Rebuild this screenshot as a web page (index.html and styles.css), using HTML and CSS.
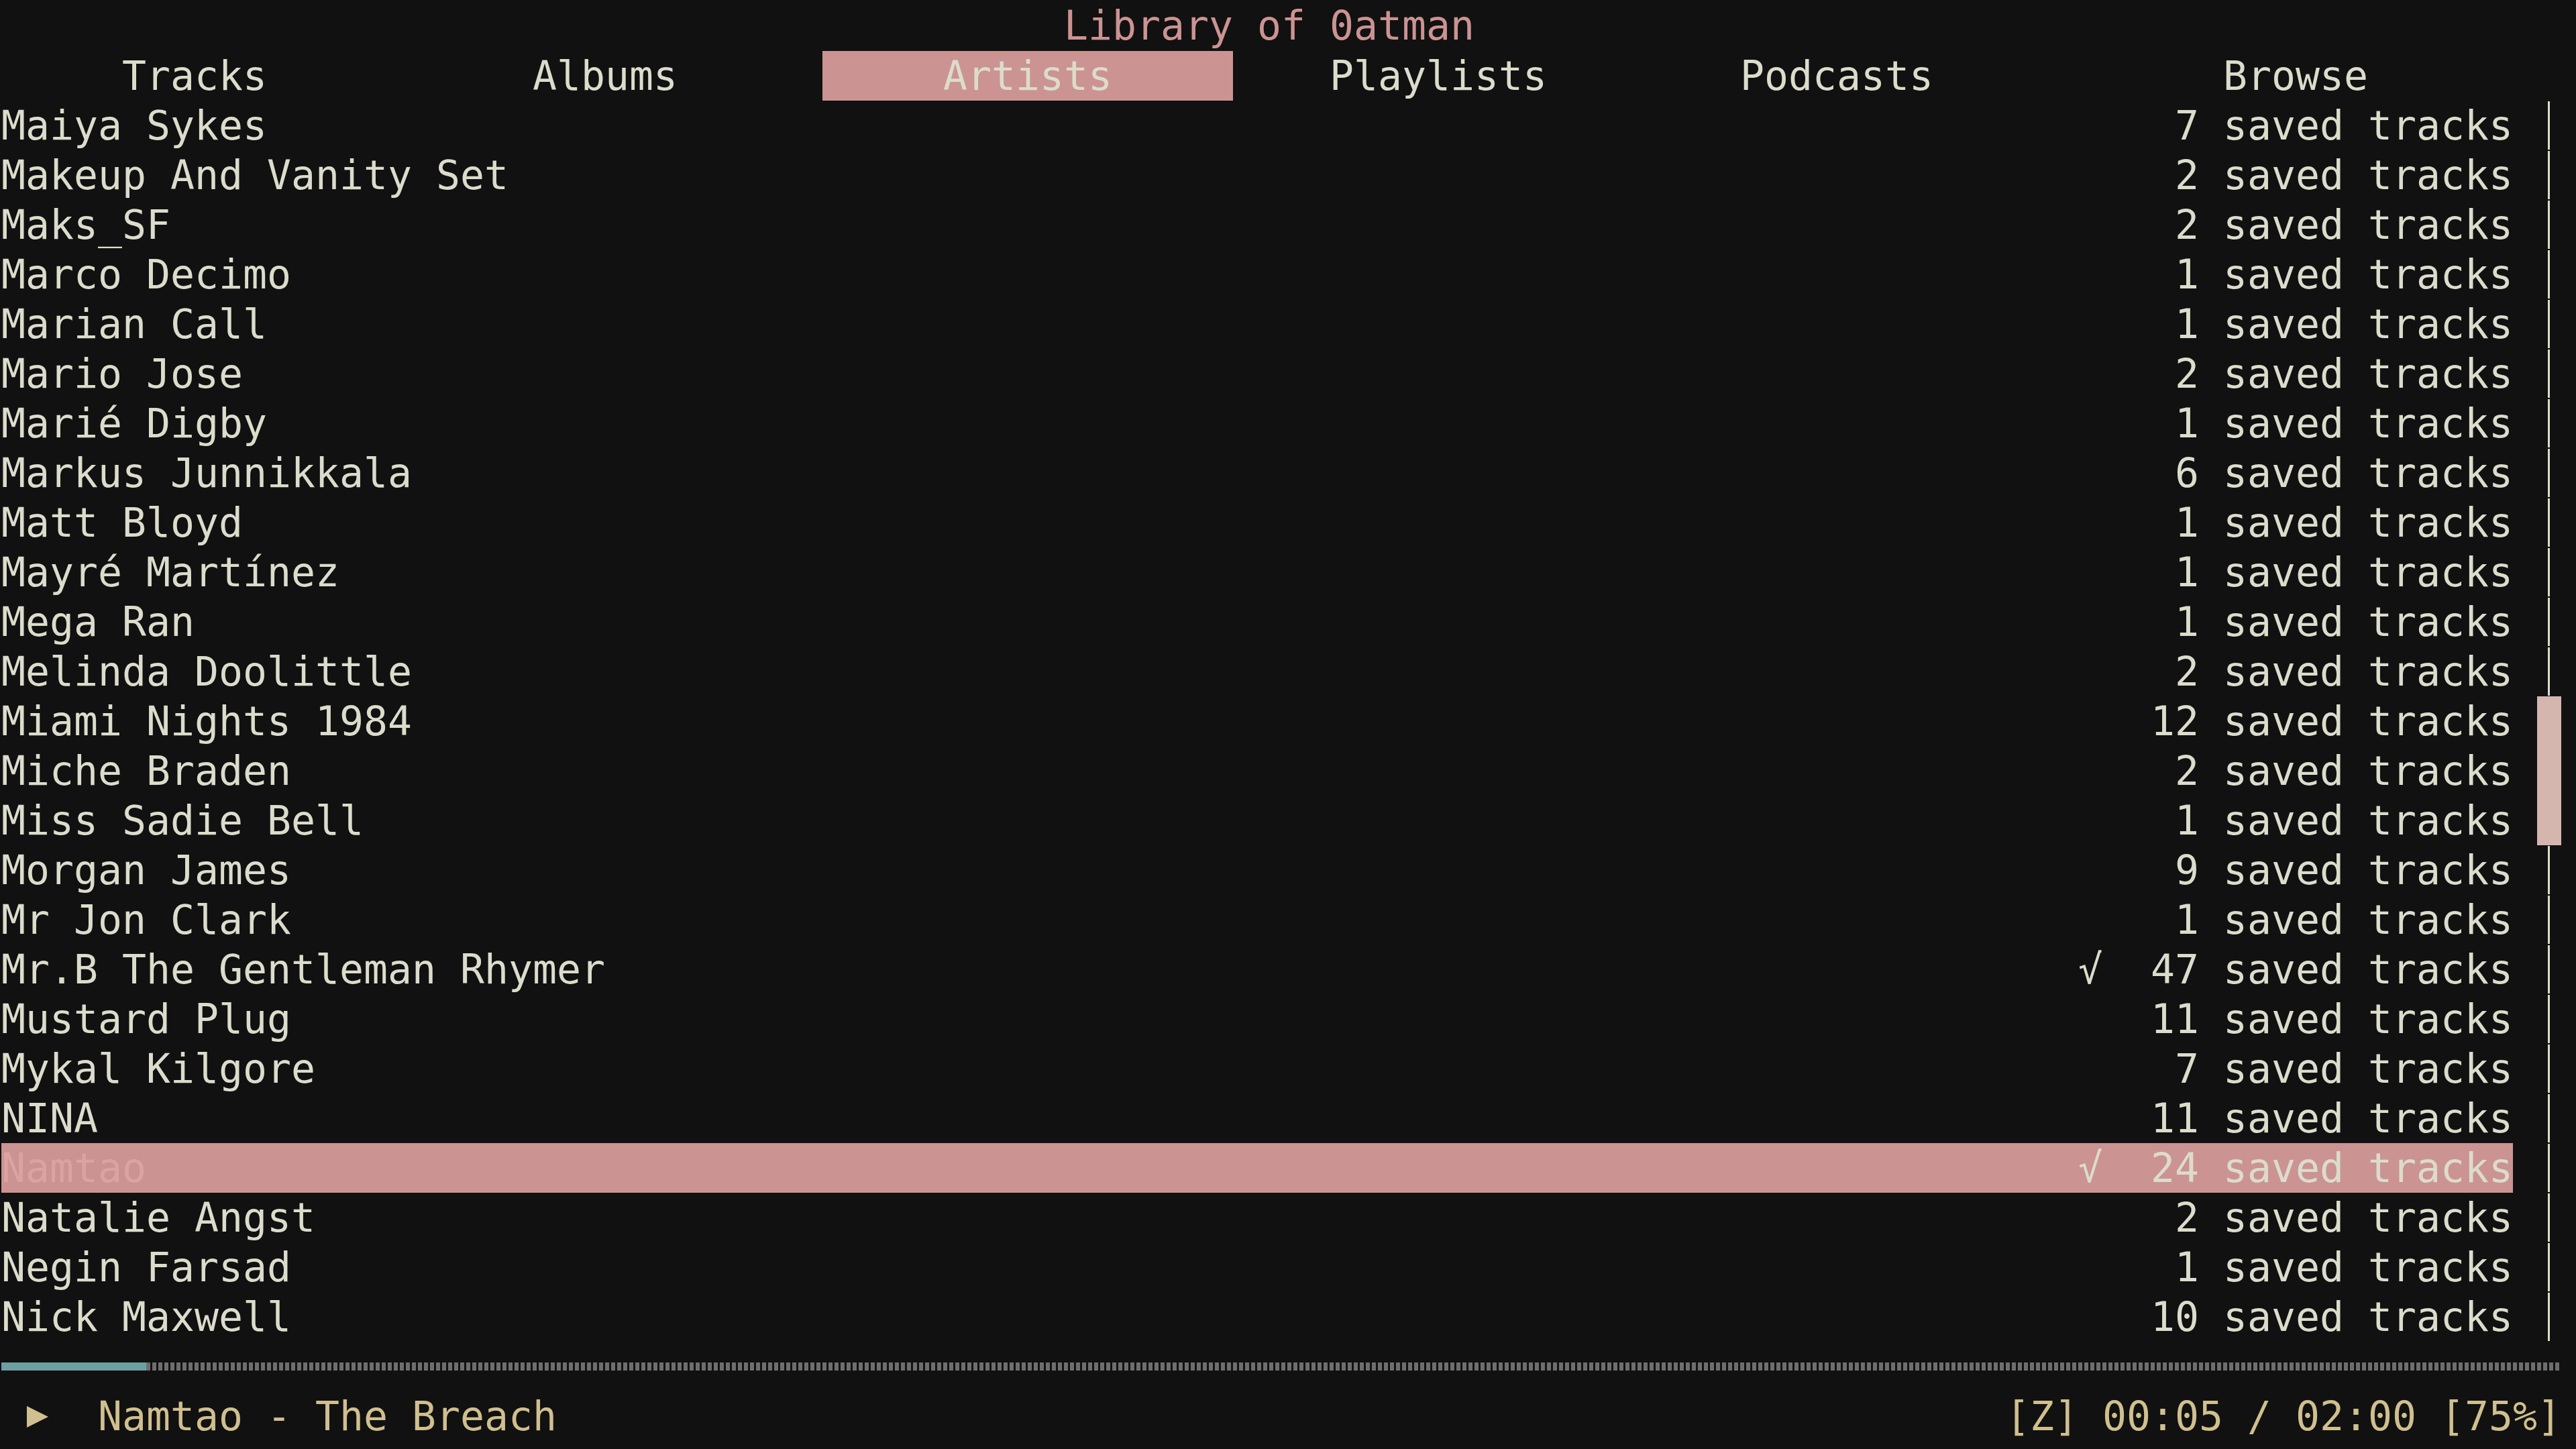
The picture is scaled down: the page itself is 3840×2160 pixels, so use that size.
FILE: index.html
```html
<!DOCTYPE html>
<html lang="en">
<head>
<meta charset="utf-8">
<title>ncspot - Library of 0atman</title>
<link rel="stylesheet" href="styles.css">
</head>
<body>
<div class="term">
  <div class="row title">Library of 0atman</div>
  <div class="row tabs">
    <div class="tab even">Tracks</div>
    <div class="tab even">Albums</div>
    <div class="tab active">Artists</div>
    <div class="tab">Playlists</div>
    <div class="tab even">Podcasts</div>
    <div class="tab even">Browse</div>
  </div>
  <div class="body">
    <div class="list">
      <div class="row item"><span class="name">Maiya Sykes</span><span class="count">7 saved tracks</span></div>
      <div class="row item"><span class="name">Makeup And Vanity Set</span><span class="count">2 saved tracks</span></div>
      <div class="row item"><span class="name">Maks_SF</span><span class="count">2 saved tracks</span></div>
      <div class="row item"><span class="name">Marco Decimo</span><span class="count">1 saved tracks</span></div>
      <div class="row item"><span class="name">Marian Call</span><span class="count">1 saved tracks</span></div>
      <div class="row item"><span class="name">Mario Jose</span><span class="count">2 saved tracks</span></div>
      <div class="row item"><span class="name">Marié Digby</span><span class="count">1 saved tracks</span></div>
      <div class="row item"><span class="name">Markus Junnikkala</span><span class="count">6 saved tracks</span></div>
      <div class="row item"><span class="name">Matt Bloyd</span><span class="count">1 saved tracks</span></div>
      <div class="row item"><span class="name">Mayré Martínez</span><span class="count">1 saved tracks</span></div>
      <div class="row item"><span class="name">Mega Ran</span><span class="count">1 saved tracks</span></div>
      <div class="row item"><span class="name">Melinda Doolittle</span><span class="count">2 saved tracks</span></div>
      <div class="row item"><span class="name">Miami Nights 1984</span><span class="count">12 saved tracks</span></div>
      <div class="row item"><span class="name">Miche Braden</span><span class="count">2 saved tracks</span></div>
      <div class="row item"><span class="name">Miss Sadie Bell</span><span class="count">1 saved tracks</span></div>
      <div class="row item"><span class="name">Morgan James</span><span class="count">9 saved tracks</span></div>
      <div class="row item"><span class="name">Mr Jon Clark</span><span class="count">1 saved tracks</span></div>
      <div class="row item"><span class="name">Mr.B The Gentleman Rhymer</span><span class="saved">√</span><span class="count">47 saved tracks</span></div>
      <div class="row item"><span class="name">Mustard Plug</span><span class="count">11 saved tracks</span></div>
      <div class="row item"><span class="name">Mykal Kilgore</span><span class="count">7 saved tracks</span></div>
      <div class="row item"><span class="name">NINA</span><span class="count">11 saved tracks</span></div>
      <div class="row item selected"><span class="name">Namtao</span><span class="saved">√</span><span class="count">24 saved tracks</span></div>
      <div class="row item"><span class="name">Natalie Angst</span><span class="count">2 saved tracks</span></div>
      <div class="row item"><span class="name">Negin Farsad</span><span class="count">1 saved tracks</span></div>
      <div class="row item"><span class="name">Nick Maxwell</span><span class="count">10 saved tracks</span></div>
    </div>
    <div class="scrollbar">
      <div class="sb-line sb-before"></div>
      <div class="sb-thumb"></div>
      <div class="sb-line sb-after"></div>
    </div>
  </div>
  <div class="row progress">
    <div class="bar"><div class="bar-fill" style="width:216px"></div><div class="bar-rest"></div></div>
  </div>
  <div class="row status">
    <div class="now">
      <span class="play"><svg width="36" height="74" viewBox="0 0 36 74"><polygon points="2,22 34,38 2,54" fill="#d0bf8f"/></svg></span>
      <span class="track">Namtao - The Breach</span>
    </div>
    <div class="time">[Z] 00:05 / 02:00 [75%]</div>
  </div>
</div>
</body>
</html>
```

FILE: styles.css
```css
html, body {
  margin: 0;
  padding: 0;
  background: #111111;
}

.term {
  width: 3816px;
  padding: 1px 22px 13px 2px;
  font-family: "DejaVu Sans Mono", "Liberation Mono", monospace;
  font-size: 59.8px;
  line-height: 74px;
  color: #dcdccc;
  white-space: nowrap;
}

.row {
  height: 74px;
}

.title {
  text-align: center;
  color: #cc9393;
  padding-right: 36px;
}

.tabs {
  display: grid;
  grid-template-columns: 612px 612px 612px 612px 612px 1fr;
  margin-top: 1px;
}

.tab {
  text-align: center;
}

.tab.even {
  padding-right: 36px;
}

.tab.active {
  background: #cc9393;
  color: #dcdccc;
}

.body {
  display: flex;
  gap: 36px;
}

.list {
  width: 3744px;
  display: flex;
  flex-direction: column;
}

.item {
  display: flex;
}

.item .name {
  flex: 1;
  overflow: hidden;
}

.item .saved {
  margin-right: 72px;
}

.item.selected {
  background: #cc9393;
}

.item.selected .name {
  color: #dba3a2;
}

.scrollbar {
  width: 36px;
  display: flex;
  flex-direction: column;
}

.sb-line {
  background: repeating-linear-gradient(to bottom, #dcdccc 0 72px, transparent 72px 74px) no-repeat;
  background-size: 3px 100%;
  background-position: 16px 1px;
}

.sb-before {
  height: 888px;
}

.sb-thumb {
  height: 222px;
  background: #d5b6af;
}

.sb-after {
  height: 740px;
}

.progress {
  display: flex;
  align-items: center;
}

.bar {
  display: flex;
  width: 100%;
  height: 12px;
}

.bar-fill {
  background: #6ca0a3;
}

.bar-rest {
  flex: 1;
  background: repeating-linear-gradient(to right, #6e6e6e 0 6px, #111111 6px 9px);
}

.status {
  display: flex;
  justify-content: space-between;
  color: #d0bf8f;
}

.now {
  display: flex;
  padding-left: 36px;
}

.play {
  width: 36px;
  height: 74px;
  margin-right: 72px;
}

.play svg {
  display: block;
}
```
